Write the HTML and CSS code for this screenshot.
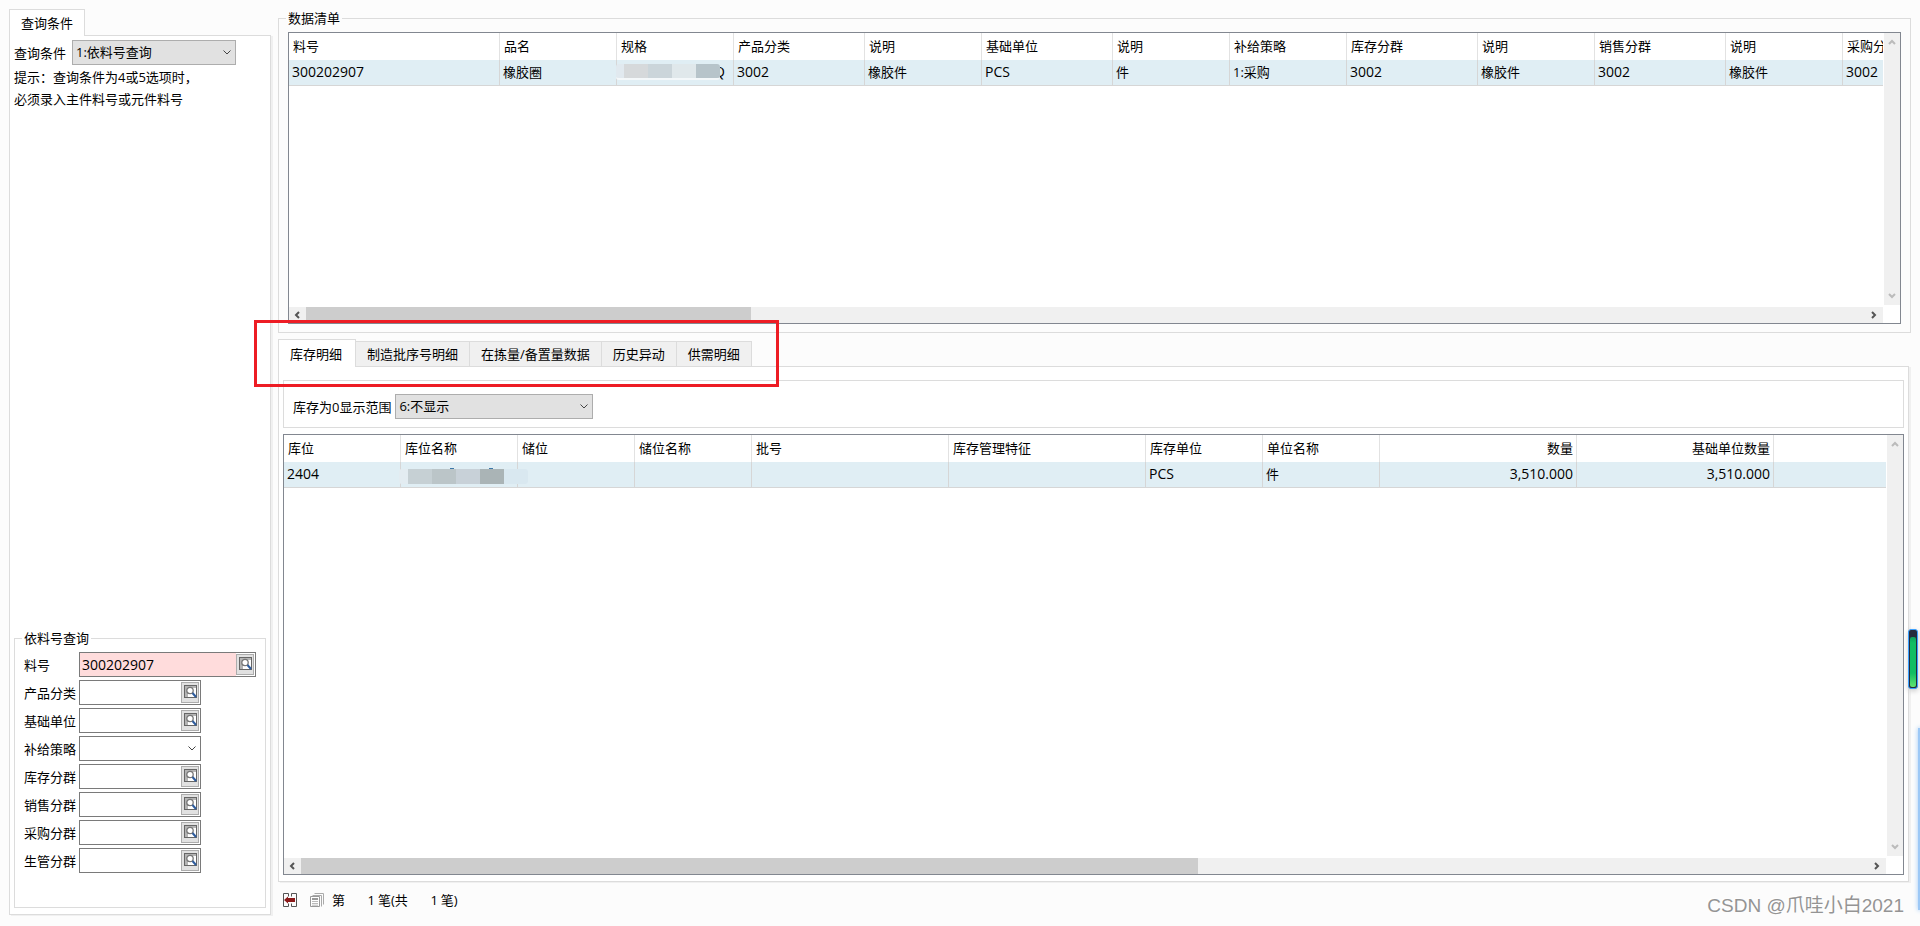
FILE: index.html
```
<!DOCTYPE html>
<html lang="zh-CN">
<head>
<meta charset="utf-8">
<title>库存查询</title>
<link rel="stylesheet" href="styles.css">
</head>
<body>
<svg class="defs" aria-hidden="true">
  <symbol id="lookup" viewBox="0 0 13 13">
    <rect x=".5" y=".5" width="12" height="12" fill="#fff" stroke="#666"/>
    <path d="M1 1h11v2H9L4 8v4H1z" fill="#b4b4b4"/>
    <circle cx="6" cy="5.500" r="3.200" fill="#fff" stroke="#777" stroke-width="1.300"/>
    <path d="M8.500 8l3.500 4" stroke="#2d5c9e" stroke-width="2"/>
  </symbol>
  <symbol id="down" viewBox="0 0 8 5"><path d="M.5.5L4 4 7.500.5" fill="none" stroke="#444"/></symbol>
  <symbol id="sb-up" viewBox="0 0 8 6"><path d="M1 5l3-3 3 3" fill="none" stroke="#bbb" stroke-width="2"/></symbol>
  <symbol id="sb-down" viewBox="0 0 8 6"><path d="M1 1l3 3 3-3" fill="none" stroke="#bbb" stroke-width="2"/></symbol>
  <symbol id="sb-left" viewBox="0 0 6 8"><path d="M5 1L2 4l3 3" fill="none" stroke="#555" stroke-width="2"/></symbol>
  <symbol id="sb-right" viewBox="0 0 6 8"><path d="M1 1l3 3-3 3" fill="none" stroke="#555" stroke-width="2"/></symbol>
</svg>

<aside class="sidebar">
  <button class="tab tab-active tab-side" type="button">查询条件</button>
  <div class="panel side-panel">
    <div class="cond">
      <label for="cond">查询条件</label>
      <span class="combo combo-gray combo-cond"><select id="cond"><option>1:依料号查询</option></select><svg><use href="#down"/></svg></span>
    </div>
    <p class="hint">提示：查询条件为4或5选项时，<br>必须录入主件料号或元件料号</p>
    <fieldset class="group query">
      <legend>依料号查询</legend>
      <div class="row"><label for="f1">料号</label><span class="field field-wide"><input id="f1" type="text" value="300202907"><button type="button" aria-label="查找料号"><svg><use href="#lookup"/></svg></button></span></div>
      <div class="row"><label for="f2">产品分类</label><span class="field"><input id="f2" type="text"><button type="button" aria-label="查找产品分类"><svg><use href="#lookup"/></svg></button></span></div>
      <div class="row"><label for="f3">基础单位</label><span class="field"><input id="f3" type="text"><button type="button" aria-label="查找基础单位"><svg><use href="#lookup"/></svg></button></span></div>
      <div class="row"><label for="f4">补给策略</label><span class="combo combo-plain"><select id="f4"><option></option></select><svg><use href="#down"/></svg></span></div>
      <div class="row"><label for="f5">库存分群</label><span class="field"><input id="f5" type="text"><button type="button" aria-label="查找库存分群"><svg><use href="#lookup"/></svg></button></span></div>
      <div class="row"><label for="f6">销售分群</label><span class="field"><input id="f6" type="text"><button type="button" aria-label="查找销售分群"><svg><use href="#lookup"/></svg></button></span></div>
      <div class="row"><label for="f7">采购分群</label><span class="field"><input id="f7" type="text"><button type="button" aria-label="查找采购分群"><svg><use href="#lookup"/></svg></button></span></div>
      <div class="row"><label for="f8">生管分群</label><span class="field"><input id="f8" type="text"><button type="button" aria-label="查找生管分群"><svg><use href="#lookup"/></svg></button></span></div>
    </fieldset>
  </div>
</aside>

<main class="main">
  <fieldset class="group list">
    <legend>数据清单</legend>
    <div class="view">
      <div class="clip">
        <table class="items">
          <colgroup><col class="c211"><col class="c117"><col class="c117"><col class="c131"><col class="c117"><col class="c131"><col class="c117"><col class="c117"><col class="c131"><col class="c117"><col class="c131"><col class="c117"><col></colgroup>
          <thead><tr><th>料号</th><th>品名</th><th>规格</th><th>产品分类</th><th>说明</th><th>基础单位</th><th>说明</th><th>补给策略</th><th>库存分群</th><th>说明</th><th>销售分群</th><th>说明</th><th>采购分群</th></tr></thead>
          <tbody><tr><td class="lat">300202907</td><td>橡胶圈</td><td class="masked"><span class="mosaic mosaic-a"></span><span class="tail">Q</span></td><td class="lat">3002</td><td>橡胶件</td><td class="lat">PCS</td><td>件</td><td>1:采购</td><td class="lat">3002</td><td>橡胶件</td><td class="lat">3002</td><td>橡胶件</td><td class="lat">3002</td></tr></tbody>
        </table>
      </div>
      <div class="vbar"><svg class="v"><use href="#sb-up"/></svg><svg class="v"><use href="#sb-down"/></svg></div>
      <div class="hbar"><svg class="h"><use href="#sb-left"/></svg><div class="track"><div class="thumb" style="width:28.5%"></div></div><svg class="h"><use href="#sb-right"/></svg></div>
    </div>
  </fieldset>

  <section class="detail">
    <nav class="tabs">
      <button class="tab tab-active" type="button">库存明细</button>
      <button class="tab" type="button">制造批序号明细</button>
      <button class="tab" type="button">在拣量/备置量数据</button>
      <button class="tab" type="button">历史异动</button>
      <button class="tab" type="button">供需明细</button>
    </nav>
    <div class="panel detail-panel">
      <div class="filter">
        <label for="range">库存为0显示范围</label>
        <span class="combo combo-gray combo-range"><select id="range"><option>6:不显示</option></select><svg><use href="#down"/></svg></span>
      </div>
      <div class="view">
        <div class="clip">
          <table class="stock">
            <colgroup><col class="c117"><col class="c117"><col class="c117"><col class="c117"><col class="c197"><col class="c197"><col class="c117"><col class="c117"><col class="c197"><col class="c197"><col></colgroup>
            <thead><tr><th>库位</th><th>库位名称</th><th>储位</th><th>储位名称</th><th>批号</th><th>库存管理特征</th><th>库存单位</th><th>单位名称</th><th class="num">数量</th><th class="num">基础单位数量</th><th></th></tr></thead>
            <tbody><tr><td class="lat">2404</td><td class="masked"><span class="mosaic mosaic-b"></span></td><td></td><td></td><td></td><td></td><td class="lat">PCS</td><td>件</td><td class="lat num">3,510.000</td><td class="lat num">3,510.000</td><td></td></tr></tbody>
          </table>
        </div>
        <div class="vbar"><svg class="v"><use href="#sb-up"/></svg><svg class="v"><use href="#sb-down"/></svg></div>
        <div class="hbar"><svg class="h"><use href="#sb-left"/></svg><div class="track"><div class="thumb" style="width:57.2%"></div></div><svg class="h"><use href="#sb-right"/></svg></div>
      </div>
    </div>
    <div class="marker"></div>
  </section>

  <footer class="pager">
    <button type="button" aria-label="返回"><svg viewBox="0 0 14 14"><path d="M5.500 .5h-5v13h5M8.500 .5h5v13h-5M5.500 .5v3M8.500 .5v3M5.500 10.500v3M8.500 10.500v3" fill="none" stroke="#555"/><path d="M1 7l4-3.500v1.500h7v4H5v1.500z" fill="#8b1a1a"/></svg></button>
    <button type="button" aria-label="复制"><svg viewBox="0 0 14 14"><path d="M4.500 .5h9v11M2.500 2.500h9v11" fill="none" stroke="#aaa"/><path d="M.5 3.500h9v10h-9z" fill="#fff" stroke="#999"/><path d="M2 5h6v2H2z" fill="#999"/><path d="M2 8.500h6M2 10.500h6M2 12.200h6" stroke="#aaa" stroke-width=".8"/></svg></button>
    <span>第</span><span class="n">1</span><span>笔(共</span><span class="n">1</span><span>笔)</span>
  </footer>
</main>

<div class="gauge"><i></i></div>
<div class="glow"></div>
<div class="credit">CSDN @爪哇小白2021</div>
</body>
</html>
```
FILE: styles.css
```
* { box-sizing: border-box; }
body {
  margin: 0;
  min-height: 100vh;
  padding: 9px 9px 11px;
  display: flex;
  gap: 6px;
  position: relative;
  overflow: hidden;
  background: #fcfcfc;
  color: #000;
  font: 13px/18px "Open Sans", "Noto Sans CJK SC", sans-serif;
}
button, input, select { font: inherit; color: inherit; margin: 0; }
svg { display: block; }
.defs { position: absolute; width: 0; height: 0; }

.panel {
  background: #fff;
  border: 1px solid #dcdcdc;
  box-shadow: 2px 1px 0 #f0f0f0;
}
.group {
  margin: 0;
  min-width: 0;
  border: 1px solid #dcdcdc;
  padding: 5px 9px 8px;
}
.group legend { margin-left: -2px; padding: 0 2px; line-height: 18px; }

/* tabs */
.tabs { display: flex; align-items: flex-end; }
.tab {
  height: 25px;
  padding: 0 11px;
  border: 1px solid #dcdcdc;
  border-width: 1px 1px 0 0;
  background: #f0f0f0;
  line-height: 24px;
}
.tab-active {
  height: 28px;
  margin-bottom: -1px;
  padding: 0 13px 0 11px;
  border-width: 1px 1px 0 1px;
  background: #fff;
  position: relative;
}
.tab-side { align-self: flex-start; padding: 0 11px; height: 27px; }

/* drop-downs and fields */
.combo { position: relative; display: block; width: 122px; height: 25px; }
.combo select {
  appearance: none;
  width: 100%;
  height: 100%;
  padding: 0 20px 1px 3px;
  border: 1px solid #7a7a7a;
  border-radius: 0;
  background: #fff;
}
.combo svg { position: absolute; right: 5px; top: 10px; width: 8px; height: 5px; pointer-events: none; }
.combo-gray select { background: #e1e1e1; border-color: #adadad; }
.combo-cond { width: 164px; }
.combo-range { width: 198px; }

.field {
  display: flex;
  align-items: center;
  width: 122px;
  height: 25px;
  padding-right: 1px;
  border: 1px solid #7a7a7a;
  background: #fff;
}
.field input { flex: 1; min-width: 0; height: 100%; border: 0; padding: 0 2px; background: none; font-size: 14px; }
.field button { width: 18px; height: 21px; padding: 0 1px 2px 2px; border: 1px solid #adadad; background: #e1e1e1; }
.field svg { width: 13px; height: 13px; }
.field-wide { width: 177px; }
.field-wide input { background: #ffdcdc; }

/* sidebar */
.sidebar { flex: 0 0 263px; display: flex; flex-direction: column; }
.side-panel {
  flex: 1;
  display: flex;
  flex-direction: column;
  width: 262px;
  padding: 4px 4px 6px;
}
.cond { display: flex; align-items: center; gap: 6px; }
.hint { margin: 1px 0 0; line-height: 22px; white-space: nowrap; }
.query { margin-top: auto; padding: 5px 9px 34px; }
.row { display: flex; align-items: center; }
.row + .row { margin-top: 3px; }
.row label { width: 55px; }

/* main column */
.main { flex: 1; min-width: 0; display: flex; flex-direction: column; }
.list { flex: 324 1 324px; display: flex; flex-direction: column; }
.detail { flex: 543 1 543px; margin-top: 6px; display: flex; flex-direction: column; position: relative; }
.detail-panel { flex: 1; display: flex; flex-direction: column; padding: 13px 4px 6px; margin-right: 2px; }
.filter {
  display: flex;
  align-items: center;
  gap: 4px;
  padding: 13px 9px 8px;
  border: 1px solid #dcdcdc;
  margin-bottom: 6px;
}
.view {
  flex: 1;
  min-height: 0;
  display: grid;
  grid-template: minmax(0, 1fr) 17px / minmax(0, 1fr) 17px;
  border: 1px solid #828790;
  background: #fff;
}
.clip { overflow: hidden; }
.vbar {
  display: flex;
  flex-direction: column;
  justify-content: space-between;
  align-items: center;
  padding: 6px 0;
  margin: 0 0 1px 1px;
  background: #f0f0f0;
}
.v { width: 8px; height: 6px; }
.h { width: 6px; height: 8px; margin: 0 6px 0 5px; }
.hbar { display: flex; align-items: center; background: #f0f0f0; margin-top: 1px; }
.track { flex: 1; height: 100%; }
.thumb { height: 100%; background: #cdcdcd; }

/* tables */
table { table-layout: fixed; border-collapse: separate; border-spacing: 0; }
.items { width: 1684px; }
.stock { width: 100%; }
.c117 { width: 117px; }
.c131 { width: 131px; }
.c197 { width: 197px; }
.c211 { width: 211px; }
th, td { padding: 0 4px 1px; text-align: left; font-weight: 400; white-space: nowrap; border-right: 1px solid #e2e2e2; }
th { height: 27px; }
td { height: 26px; padding: 0 3px 1px; background: #e0eef4; border-right-color: #d6d6d6; border-bottom: 1px solid #d6d6d6; }
.stock th:last-child, .stock td:last-child { border-right: 0; }
.lat { font-size: 14px; }
.num { text-align: right; padding-right: 3px; }

/* pixelated cover over a cell */
.masked { position: relative; }
.mosaic { position: absolute; z-index: 1; left: -1px; height: 15px; border-radius: 3px; }
.mosaic-a {
  top: 4px;
  width: 104px;
  height: 16px;
  border-bottom: 2px solid #f4f8fa;
  background: linear-gradient(90deg, #e1e9ef 8px, #d6d9db 8px 32px, #cbd5da 32px 56px, #e0e8eb 56px 80px, #b7c4ca 80px);
}
.mosaic-b {
  top: 7px;
  left: -2px;
  width: 129px;
  background: linear-gradient(90deg, #e3ecf1 9px, #c6d0d4 9px 33px, #bbc5c8 33px 57px, #c8d1d8 57px 81px, #aab4b6 81px 105px, #d9e8f0 105px);
}
.mosaic-b::before {
  content: "";
  position: absolute;
  top: -1px;
  left: 51px;
  width: 43px;
  height: 1px;
  background: linear-gradient(90deg, #3d78a8 4px, transparent 4px 39px, #3d78a8 39px);
}
.tail { display: block; margin-left: 94px; font-size: 14px; }

/* record pager */
.pager { display: flex; align-items: center; height: 33px; padding: 2px 5px 0; }
.pager button { padding: 0; border: 0; background: none; width: 14px; height: 14px; margin-right: 13px; }
.pager button + button { margin-right: 8px; }
.pager svg { width: 14px; height: 14px; }
.n { width: 30px; margin-right: 3px; text-align: right; }

/* overlays */
.marker { position: absolute; left: -24px; top: -19px; width: 525px; height: 67px; border: 3px solid #ed1c24; pointer-events: none; }
.gauge {
  position: absolute;
  right: 2px;
  top: 629px;
  width: 10px;
  height: 60px;
  padding: 7px 1px 1px;
  border: 1px solid #3aa0ff;
  border-radius: 3px;
  background: #262a3c;
  box-shadow: 0 2px 5px #ccc;
}
.gauge i { display: block; height: 100%; border-radius: 2px; background: linear-gradient(#0e9f5c, #12bd62 6px 36px, #62e46f); }
.glow { position: absolute; right: -3px; top: 728px; width: 5px; height: 182px; background: #9cc8f6; box-shadow: 0 0 5px #9cc8f6; }
.credit {
  position: absolute;
  right: 16px;
  bottom: 6px;
  font: 19px/28px "Liberation Sans", "Noto Sans CJK SC", sans-serif;
  color: #949494;
  text-shadow: -1px -1px 0 #fff;
}
```
